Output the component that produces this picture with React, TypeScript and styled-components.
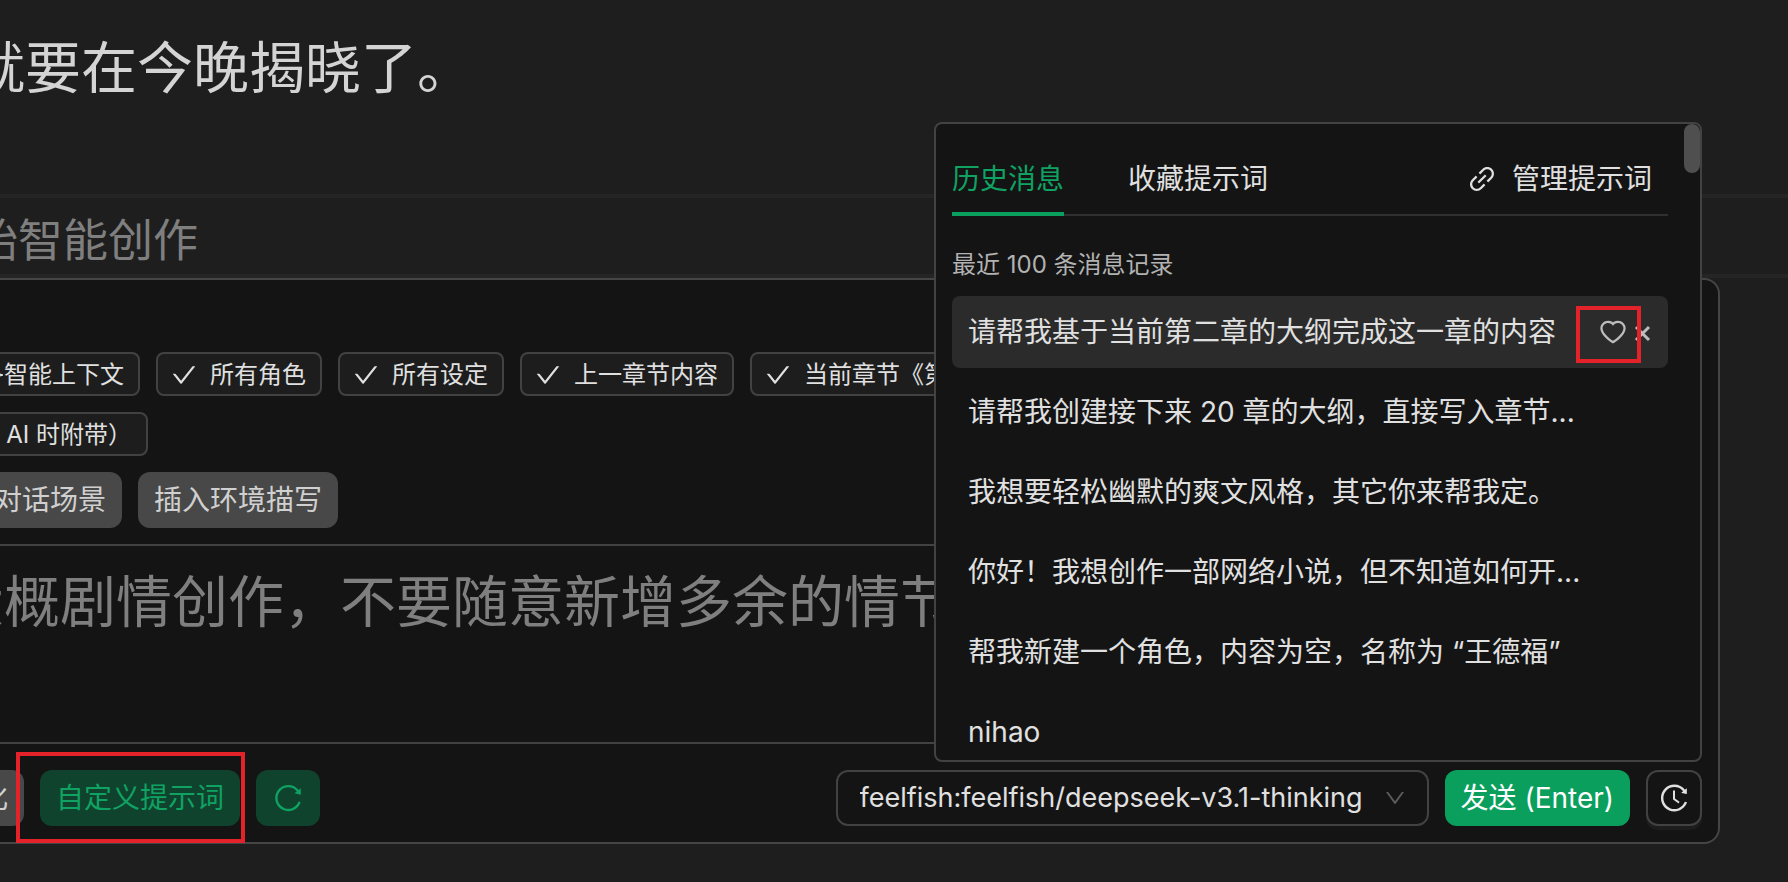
import React from 'react';
import styled, { createGlobalStyle } from 'styled-components';
import {
  AiOutlineCheck,
  AiOutlineDown,
  AiOutlineHeart,
  AiOutlineHistory,
  AiOutlineLink,
  AiOutlineReload,
} from 'react-icons/ai';

const c = {
  page: '#1e1e1e',
  panel: '#141414',
  line: '#424242',
  faint: '#303030',
  band: '#252525',
  text: '#e0e0e0',
  muted: '#b2b2b2',
  dim: '#7f7f7f',
  green: '#0b9f5d',
  deepGreen: '#0f432d',
  mark: '#e4222a',
};

const GlobalStyle = createGlobalStyle`
  *, *::before, *::after { box-sizing: border-box; }
  body {
    margin: 0;
    background: ${c.page};
    color: ${c.text};
    font-family: Inter, 'Noto Sans CJK SC', sans-serif;
    font-size: 28px;
    line-height: 40px;
    overflow: hidden;
  }
  button, select, textarea { font: inherit; color: inherit; }
  button { cursor: pointer; }
  svg { display: block; flex: none; }
`;

const Page = styled.main`
  min-height: 100vh;
  overflow: hidden;
`;

const Editor = styled.section`
  padding: 28px 0 86px;
  margin-left: -31px;
`;

const Paragraph = styled.p`
  margin: 0;
  font-size: 56px;
  line-height: 80px;
  font-weight: 400;
  color: #d4d4d4;
  white-space: nowrap;
`;

const TitleBar = styled.header`
  border: solid ${c.band};
  border-width: 4px 0;
  padding: 10px 0 0;
  margin-left: -27px;
`;

const Title = styled.h2`
  margin: 0;
  font-size: 45px;
  line-height: 66px;
  font-weight: 400;
  color: ${c.dim};
  white-space: nowrap;
`;

const Composer = styled.section`
  margin: 0 68px 38px -82px;
  background: ${c.panel};
  border: 2px solid #454545;
  border-radius: 16px;
`;

const Context = styled.div`
  display: flex;
  flex-direction: column;
  gap: 16px;
  padding: 72px 16px 16px;
`;

const Row = styled.div`
  display: flex;
  gap: 16px;
`;

const Tag = styled.button<{ $basis?: number; $tight?: boolean }>`
  flex: 0 0 ${(p) => (p.$basis ? `${p.$basis}px` : 'auto')};
  display: flex;
  justify-content: flex-end;
  align-items: center;
  gap: ${(p) => (p.$tight ? 1 : 12)}px;
  height: 44px;
  padding: 2px 14px 0 12px;
  overflow: hidden;
  border: 2px solid ${c.line};
  border-radius: 8px;
  background: #1d1d1d;
  font-size: 24px;
  line-height: 38px;
  white-space: nowrap;
`;

const tones = {
  gray: { bg: '#484848', fg: '#d0d0d0' },
  deep: { bg: c.deepGreen, fg: '#0fa263' },
  primary: { bg: c.green, fg: '#ffffff' },
};

const Button = styled.button<{ $tone: keyof typeof tones; $basis?: number }>`
  flex: 0 0 ${(p) => (p.$basis ? `${p.$basis}px` : 'auto')};
  display: flex;
  justify-content: flex-end;
  align-items: center;
  height: 56px;
  padding: 0 16px;
  border: 0;
  border-radius: 12px;
  background: ${(p) => tones[p.$tone].bg};
  color: ${(p) => tones[p.$tone].fg};
  white-space: nowrap;
`;

const InputArea = styled.div`
  padding: 0 16px;
`;

const Input = styled.textarea`
  display: block;
  width: 100%;
  height: 200px;
  padding: 16px 0 16px 12px;
  border: solid ${c.line};
  border-width: 2px 0;
  background: transparent;
  font-size: 56px;
  line-height: 80px;
  resize: none;
  outline: none;
  &::placeholder { color: ${c.dim}; opacity: 1; }
`;

const Footer = styled.footer`
  display: flex;
  justify-content: space-between;
  padding: 26px 16px 16px;
`;

const Picker = styled.label`
  display: flex;
  align-items: center;
  width: 593px;
  height: 56px;
  border: 2px solid ${c.line};
  border-radius: 12px;
  padding-right: 20px;
  color: #5c5c5c;
`;

const Select = styled.select`
  flex: 1;
  min-width: 0;
  height: 100%;
  padding: 0 0 0 22px;
  border: 0;
  background: transparent;
  color: ${c.text};
  font-size: 27px;
  appearance: none;
  outline: none;
`;

const Anchor = styled.div`
  position: relative;
`;

const HistoryButton = styled.button`
  display: grid;
  place-items: center;
  width: 56px;
  height: 56px;
  padding: 0;
  border: 2px solid ${c.line};
  border-radius: 12px;
  background: ${c.panel};
  box-shadow: 0 4px 0 #1d1d1d;
`;

const Popup = styled.aside`
  position: absolute;
  right: 0;
  bottom: 64px;
  display: flex;
  width: 768px;
  height: 640px;
  overflow: hidden;
  border: 2px solid ${c.line};
  border-radius: 8px;
  background: ${c.panel};
`;

const PopupBody = styled.div`
  flex: 1;
  min-width: 0;
  padding: 24px 16px 0;
`;

const ScrollTrack = styled.div`
  width: 16px;
`;

const ScrollThumb = styled.div`
  height: 49px;
  border-radius: 8px;
  background: #4f4f4f;
`;

const Tabs = styled.nav`
  display: flex;
  align-items: stretch;
  gap: 64px;
  height: 68px;
  border-bottom: 2px solid ${c.faint};
`;

const Tab = styled.button<{ $active?: boolean }>`
  height: 68px;
  padding: 0 0 2px;
  border: 0;
  background: none;
  line-height: 60px;
  color: ${(p) => (p.$active ? '#0fa263' : c.text)};
  border-bottom: 4px solid ${(p) => (p.$active ? c.green : 'transparent')};
`;

const Manage = styled.a`
  display: flex;
  align-items: center;
  gap: 14px;
  margin-left: auto;
  padding: 0 16px 4px 0;
  color: inherit;
  text-decoration: none;
`;

const Hint = styled.p`
  margin: 29px 0 11px;
  font-size: 24px;
  color: ${c.muted};
`;

const List = styled.ul`
  display: flex;
  flex-direction: column;
  gap: 8px;
  margin: 0;
  padding: 0;
  list-style: none;
`;

const Item = styled.li<{ $active?: boolean }>`
  display: flex;
  align-items: center;
  height: 72px;
  padding: 0 16px;
  border-radius: 8px;
  background: ${(p) => (p.$active ? '#2b2b2b' : 'transparent')};
  white-space: nowrap;
`;

const ItemText = styled.span`
  flex: 1;
`;

const IconButton = styled.button`
  display: flex;
  padding: 0;
  border: 0;
  background: none;
  color: #bdbdbd;
`;

const Favorite = styled.span`
  position: relative;
  display: flex;
  margin-right: 6px;
`;

const Mark = styled.span<{ $inset: string }>`
  position: absolute;
  inset: ${(p) => p.$inset};
  border: 4px solid ${c.mark};
  pointer-events: none;
  z-index: 1;
`;

const Sparkle = () => (
  <svg width="24" height="24" viewBox="0 0 24 24" fill="currentColor" aria-hidden="true">
    <path d="M12 0L15 9L24 12L15 15L12 24L9 15L0 12L9 9Z" stroke="currentColor" strokeLinejoin="round" />
  </svg>
);

const CloseIcon = () => (
  <svg width="18" height="20" viewBox="0 0 18 20" aria-hidden="true">
    <path d="M2 5L15 18M15 5L2 18" stroke="currentColor" strokeWidth="3" />
  </svg>
);

const messages = [
  '请帮我基于当前第二章的大纲完成这一章的内容',
  '请帮我创建接下来 20 章的大纲，直接写入章节...',
  '我想要轻松幽默的爽文风格，其它你来帮我定。',
  '你好！我想创作一部网络小说，但不知道如何开...',
  '帮我新建一个角色，内容为空，名称为 “王德福”',
  'nihao',
];

const contexts = ['所有角色', '所有设定', '上一章节内容', '当前章节《第一章》'];

export default function App() {
  return (
    <Page>
      <GlobalStyle />
      <Editor>
        <Paragraph>就要在今晚揭晓了。</Paragraph>
      </Editor>
      <TitleBar>
        <Title>始智能创作</Title>
      </TitleBar>
      <Composer>
        <Context>
          <Row>
            <Tag $basis={204} $tight>
              <Sparkle />
              智能上下文
            </Tag>
            {contexts.map((label) => (
              <Tag key={label}>
                <AiOutlineCheck size={28} />
                {label}
              </Tag>
            ))}
          </Row>
          <Row>
            <Tag $basis={212}>发给 AI 时附带）</Tag>
          </Row>
          <Row>
            <Button $tone="gray" $basis={186}>对话场景</Button>
            <Button $tone="gray">插入环境描写</Button>
          </Row>
        </Context>
        <InputArea>
          <Input aria-label="创作要求" placeholder="大概剧情创作，不要随意新增多余的情节" />
        </InputArea>
        <Footer>
          <Row>
            <Button $tone="gray">优化</Button>
            <Anchor>
              <Button $tone="deep">自定义提示词</Button>
              <Mark $inset="-18px -5px -17px -24px" />
            </Anchor>
            <Button $tone="deep" aria-label="刷新">
              <AiOutlineReload size={32} />
            </Button>
          </Row>
          <Row>
            <Picker>
              <Select aria-label="模型" defaultValue="m">
                <option value="m">feelfish:feelfish/deepseek-v3.1-thinking</option>
              </Select>
              <AiOutlineDown size={24} />
            </Picker>
            <Button $tone="primary">发送 (Enter)</Button>
            <Anchor>
              <HistoryButton aria-label="历史">
                <AiOutlineHistory size={32} />
              </HistoryButton>
              <Popup>
                <PopupBody>
                  <Tabs>
                    <Tab $active>历史消息</Tab>
                    <Tab>收藏提示词</Tab>
                    <Manage href="#manage">
                      <AiOutlineLink size={32} />
                      管理提示词
                    </Manage>
                  </Tabs>
                  <Hint>最近 100 条消息记录</Hint>
                  <List>
                    {messages.map((message, i) => (
                      <Item key={message} $active={i === 0}>
                        <ItemText>{message}</ItemText>
                        {i === 0 && (
                          <>
                            <Favorite>
                              <IconButton aria-label="收藏">
                                <AiOutlineHeart size={30} />
                              </IconButton>
                              <Mark $inset="-11px -13px -16px -22px" />
                            </Favorite>
                            <IconButton aria-label="删除">
                              <CloseIcon />
                            </IconButton>
                          </>
                        )}
                      </Item>
                    ))}
                  </List>
                </PopupBody>
                <ScrollTrack>
                  <ScrollThumb />
                </ScrollTrack>
              </Popup>
            </Anchor>
          </Row>
        </Footer>
      </Composer>
    </Page>
  );
}
